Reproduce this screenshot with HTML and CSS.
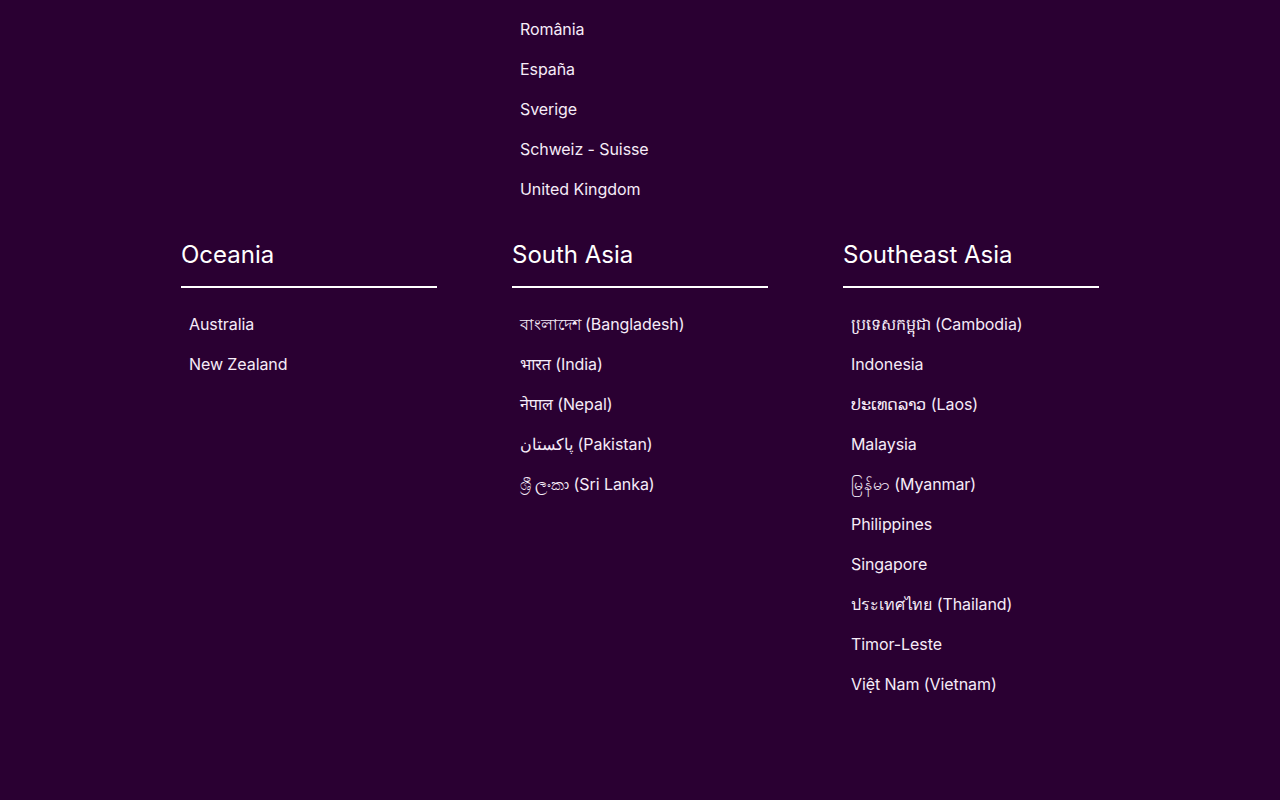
FILE: index.html
```html
<!DOCTYPE html>
<html lang="en">
<head>
<meta charset="utf-8">
<title>Regions</title>
<link rel="stylesheet" href="styles.css">
</head>
<body>
<main class="regions">
  <section class="region region-top"></section>
  <section class="region region-top">
    <ul class="countries">
      <li><a href="#">România</a></li>
      <li><a href="#">España</a></li>
      <li><a href="#">Sverige</a></li>
      <li><a href="#">Schweiz - Suisse</a></li>
      <li><a href="#">United Kingdom</a></li>
    </ul>
  </section>
  <section class="region region-top"></section>

  <section class="region">
    <h2 class="region-title">Oceania</h2>
    <ul class="countries">
      <li><a href="#">Australia</a></li>
      <li><a href="#">New Zealand</a></li>
    </ul>
  </section>
  <section class="region">
    <h2 class="region-title">South Asia</h2>
    <ul class="countries">
      <li><a href="#">বাংলাদেশ (Bangladesh)</a></li>
      <li><a href="#">भारत (India)</a></li>
      <li><a href="#">नेपाल (Nepal)</a></li>
      <li><a href="#">پاکستان (Pakistan)</a></li>
      <li><a href="#">ශ්‍රී ලංකා (Sri Lanka)</a></li>
    </ul>
  </section>
  <section class="region">
    <h2 class="region-title">Southeast Asia</h2>
    <ul class="countries">
      <li><a href="#">ប្រទេសកម្ពុជា (Cambodia)</a></li>
      <li><a href="#">Indonesia</a></li>
      <li><a href="#">ປະເທດລາວ (Laos)</a></li>
      <li><a href="#">Malaysia</a></li>
      <li><a href="#">မြန်မာ (Myanmar)</a></li>
      <li><a href="#">Philippines</a></li>
      <li><a href="#">Singapore</a></li>
      <li><a href="#">ประเทศไทย (Thailand)</a></li>
      <li><a href="#">Timor-Leste</a></li>
      <li><a href="#">Việt Nam (Vietnam)</a></li>
    </ul>
  </section>
</main>
</body>
</html>
```

FILE: styles.css
```css
html, body {
  margin: 0;
  padding: 0;
  background: #2a0032;
  height: 100%;
}

body {
  font-family: Inter, "Noto Sans", "Noto Sans CJK SC", sans-serif;
  color: #f6ecf8;
}

.regions {
  display: grid;
  grid-template-columns: repeat(3, 256px);
  column-gap: 75px;
  justify-content: center;
  padding-top: 9px;
}

.region-top {
  margin-bottom: 29px;
}

.region-title {
  margin: 0 0 16px;
  padding-top: 1px;
  padding-bottom: 15px;
  border-bottom: 2px solid #ffffff;
  font-size: 24px;
  line-height: 32px;
  font-weight: 400;
  color: #ffffff;
}

.countries {
  list-style: none;
  margin: 0;
  padding: 0;
}

.countries li {
  padding: 10px 8px;
  line-height: 20px;
  font-size: 16px;
  letter-spacing: -0.08px;
}

.countries a {
  color: #f6ecf8;
  text-decoration: none;
}
```
